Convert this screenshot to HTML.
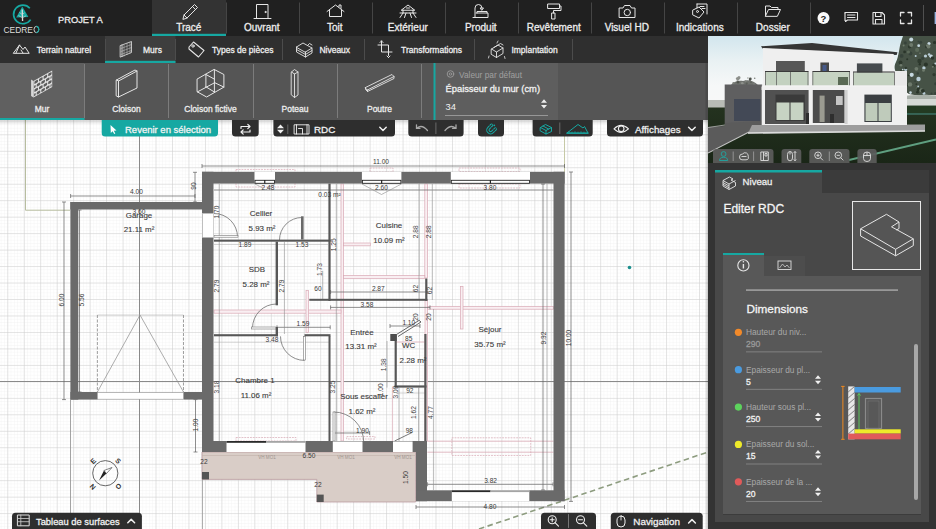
<!DOCTYPE html><html><head><meta charset="utf-8"><style>*{margin:0;padding:0}html,body{width:936px;height:529px;overflow:hidden;background:#fff}
svg{display:block;font-family:"Liberation Sans",sans-serif}
</style></head><body><svg width="936" height="529" viewBox="0 0 936 529"><rect x="0" y="0" width="936" height="36" fill="#202020" />
<rect x="152" y="0" width="74" height="36" fill="#333" />
<rect x="152" y="33.8" width="74" height="2.2" fill="#16a8a2" />
<rect x="226" y="2.5" width="1" height="31" fill="#454545" />
<rect x="299" y="2.5" width="1" height="31" fill="#454545" />
<rect x="372" y="2.5" width="1" height="31" fill="#454545" />
<rect x="445" y="2.5" width="1" height="31" fill="#454545" />
<rect x="518" y="2.5" width="1" height="31" fill="#454545" />
<rect x="591" y="2.5" width="1" height="31" fill="#454545" />
<rect x="664" y="2.5" width="1" height="31" fill="#454545" />
<rect x="737" y="2.5" width="1" height="31" fill="#454545" />
<rect x="810" y="2.5" width="1" height="31" fill="#454545" />
<rect x="923" y="5" width="1" height="26" fill="#505050" />
<text x="188.8" y="30.5" font-size="10" fill="#eee" font-weight="normal" text-anchor="middle" stroke="#eee" stroke-width="0.28" class="tx">Tracé</text>
<text x="261.8" y="30.5" font-size="10" fill="#eee" font-weight="normal" text-anchor="middle" stroke="#eee" stroke-width="0.28" class="tx">Ouvrant</text>
<text x="334.8" y="30.5" font-size="10" fill="#eee" font-weight="normal" text-anchor="middle" stroke="#eee" stroke-width="0.28" class="tx">Toit</text>
<text x="407.8" y="30.5" font-size="10" fill="#eee" font-weight="normal" text-anchor="middle" stroke="#eee" stroke-width="0.28" class="tx">Extérieur</text>
<text x="480.8" y="30.5" font-size="10" fill="#eee" font-weight="normal" text-anchor="middle" stroke="#eee" stroke-width="0.28" class="tx">Produit</text>
<text x="553.8" y="30.5" font-size="10" fill="#eee" font-weight="normal" text-anchor="middle" stroke="#eee" stroke-width="0.28" class="tx">Revêtement</text>
<text x="626.8" y="30.5" font-size="10" fill="#eee" font-weight="normal" text-anchor="middle" stroke="#eee" stroke-width="0.28" class="tx">Visuel HD</text>
<text x="699.8" y="30.5" font-size="10" fill="#eee" font-weight="normal" text-anchor="middle" stroke="#eee" stroke-width="0.28" class="tx">Indications</text>
<text x="772.8" y="30.5" font-size="10" fill="#eee" font-weight="normal" text-anchor="middle" stroke="#eee" stroke-width="0.28" class="tx">Dossier</text>
<path d="M29.8 8.2 A9.3 9.3 0 1 0 30.6 19.6" fill="none" stroke="#16a8a2" stroke-width="1.7"/>
<path d="M22.3 6.5 L16.2 17.6 L28.4 17 Z" fill="#16a8a2"/>
<path d="M22.2 9.5 L22.6 21" stroke="#e0e0e0" stroke-width="1.3" fill="none"/>
<path d="M19.5 12.5 L22.2 14.5 L24.5 12.8 M18.5 15.5 L22.4 17.8 L26 15.8" stroke="#ccc" stroke-width="0.7" fill="none"/>
<text x="3.4" y="32.8" font-size="9" fill="#ddd" font-weight="normal" text-anchor="start" textLength="29.6" lengthAdjust="spacingAndGlyphs">CEDRE</text>
<ellipse cx="36.4" cy="29.5" rx="2.4" ry="3.1" fill="none" stroke="#ccc" stroke-width="1"/>
<path d="M36.4 26.4 A2.4 3.1 0 0 1 36.4 32.6" fill="none" stroke="#16a8a2" stroke-width="1.1"/>
<text x="58" y="22.5" font-size="9.3" fill="#eee" font-weight="normal" text-anchor="start" stroke="#eee" stroke-width="0.28" class="tx">PROJET A</text>
<rect x="0" y="36" width="708" height="27" fill="#2f2f2f" />
<rect x="105" y="36" width="70.5" height="27" fill="#3e3e3e" />
<rect x="105" y="60.8" width="70.5" height="2.2" fill="#16a8a2" />
<rect x="105" y="39" width="1" height="21" fill="#4c4c4c" />
<rect x="175" y="39" width="1" height="21" fill="#4c4c4c" />
<rect x="282" y="39" width="1" height="21" fill="#4c4c4c" />
<rect x="364" y="39" width="1" height="21" fill="#4c4c4c" />
<rect x="474" y="39" width="1" height="21" fill="#4c4c4c" />
<rect x="572" y="39" width="1" height="21" fill="#4c4c4c" />
<text x="36.7" y="52.8" font-size="8.5" fill="#eee" font-weight="normal" text-anchor="start" stroke="#eee" stroke-width="0.28" class="tx">Terrain naturel</text>
<text x="143" y="52.8" font-size="8.5" fill="#eee" font-weight="normal" text-anchor="start" stroke="#eee" stroke-width="0.28" class="tx">Murs</text>
<text x="212" y="52.8" font-size="8.5" fill="#eee" font-weight="normal" text-anchor="start" stroke="#eee" stroke-width="0.28" class="tx">Types de pièces</text>
<text x="319.4" y="52.8" font-size="8.5" fill="#eee" font-weight="normal" text-anchor="start" stroke="#eee" stroke-width="0.28" class="tx">Niveaux</text>
<text x="401" y="52.8" font-size="8.5" fill="#eee" font-weight="normal" text-anchor="start" stroke="#eee" stroke-width="0.28" class="tx">Transformations</text>
<text x="511.4" y="52.8" font-size="8.5" fill="#eee" font-weight="normal" text-anchor="start" stroke="#eee" stroke-width="0.28" class="tx">Implantation</text>
<rect x="0" y="63" width="708" height="57" fill="#555555" />
<rect x="0" y="63" width="434" height="57" fill="#555555" />
<rect x="0" y="63" width="84.5" height="57" fill="#606060" />
<rect x="0" y="118" width="84.5" height="2" fill="#16a8a2" />
<rect x="84" y="64" width="1" height="54" fill="#7c7c7c" />
<rect x="168" y="64" width="1" height="54" fill="#7c7c7c" />
<rect x="253" y="64" width="1" height="54" fill="#7c7c7c" />
<rect x="337" y="64" width="1" height="54" fill="#7c7c7c" />
<rect x="421" y="64" width="1" height="54" fill="#7c7c7c" />
<text x="42" y="111.8" font-size="8.5" fill="#eee" font-weight="normal" text-anchor="middle" stroke="#eee" stroke-width="0.28" class="tx">Mur</text>
<text x="126.5" y="111.8" font-size="8.5" fill="#eee" font-weight="normal" text-anchor="middle" stroke="#eee" stroke-width="0.28" class="tx">Cloison</text>
<text x="210.5" y="111.8" font-size="8.5" fill="#eee" font-weight="normal" text-anchor="middle" stroke="#eee" stroke-width="0.28" class="tx">Cloison fictive</text>
<text x="295" y="111.8" font-size="8.5" fill="#eee" font-weight="normal" text-anchor="middle" stroke="#eee" stroke-width="0.28" class="tx">Poteau</text>
<text x="379.5" y="111.8" font-size="8.5" fill="#eee" font-weight="normal" text-anchor="middle" stroke="#eee" stroke-width="0.28" class="tx">Poutre</text>
<rect x="434" y="63" width="124" height="57" fill="#5e5e5e" />
<rect x="433.5" y="63" width="2" height="57" fill="#16a8a2" />
<rect x="705.5" y="63" width="2.5" height="57" fill="#4a4a4a" />
<text x="459" y="77.5" font-size="8.3" fill="#a0a0a0" font-weight="normal" text-anchor="start" >Valeur par défaut</text>
<text x="445.5" y="92" font-size="9.35" fill="#f2f2f2" font-weight="normal" text-anchor="start" stroke="#f2f2f2" stroke-width="0.28" class="tx">Épaisseur du mur (cm)</text>
<text x="445.5" y="110" font-size="9.35" fill="#f2f2f2" font-weight="normal" text-anchor="start" >34</text>
<rect x="445" y="115" width="103" height="0.8" fill="#a5a5a5" />
<svg x="0" y="120" width="708" height="409" viewBox="0 120 708 409">
<defs>
<pattern id="gf" x="7.3" y="150.8" width="3.294" height="3.294" patternUnits="userSpaceOnUse"><path d="M0 0H3.294M0 0V3.294" stroke="#eeeeee" stroke-width="0.6" fill="none"/></pattern>
<pattern id="gc" x="7.3" y="150.8" width="16.47" height="16.47" patternUnits="userSpaceOnUse"><path d="M0 0H16.47M0 0V16.47" stroke="#cdcdcd" stroke-width="1" fill="none"/></pattern>
<linearGradient id="shT" x1="0" y1="0" x2="0" y2="1"><stop offset="0" stop-color="#000" stop-opacity="0.16"/><stop offset="1" stop-color="#000" stop-opacity="0"/></linearGradient>
<linearGradient id="shR" x1="0" x2="1"><stop offset="0" stop-color="#000" stop-opacity="0"/><stop offset="1" stop-color="#000" stop-opacity="0.22"/></linearGradient>
</defs>
<rect x="0" y="120" width="708" height="409" fill="#fff"/>
<rect x="0" y="120" width="708" height="409" fill="url(#gf)"/>
<rect x="0" y="120" width="708" height="409" fill="url(#gc)"/>
<line x1="139.5" y1="120" x2="139.5" y2="529" stroke="#8a8a8a" stroke-width="1" />
<line x1="0" y1="381.5" x2="708" y2="381.5" stroke="#8a8a8a" stroke-width="1" />
<line x1="70.5" y1="399.6" x2="70.5" y2="529" stroke="#9a9a9a" stroke-width="0.9" />
<line x1="202.4" y1="452" x2="202.4" y2="529" stroke="#9a9a9a" stroke-width="0.9" />
<path d="M25.5 120 V210.2 H70" fill="none" stroke="#b7bd9f" stroke-width="1"/>
<line x1="564.5" y1="120" x2="564.5" y2="172" stroke="#c6c9a6" stroke-width="1" />
<path d="M479 529 L708 452" stroke="#8d9c7f" stroke-width="1.6" stroke-dasharray="5.5 3.5"/>
<path d="M202 452 H415.6 V502 H316.8 V479.4 H202 Z" fill="#d9cdc7" stroke="#b99aa0" stroke-width="0.8"/>
<rect x="202" y="472" width="7" height="7.4" fill="#555" />
<rect x="316.8" y="494.6" width="6.9" height="7.4" fill="#555" />
<line x1="202" y1="455.5" x2="415" y2="455.5" stroke="#c0b0aa" stroke-width="0.6" />
<rect x="341" y="184" width="2.6" height="257" fill="#f9eff2" stroke="#d9a9b5" stroke-width="0.7"/>
<rect x="424.8" y="184" width="2.6" height="94" fill="#f9eff2" stroke="#d9a9b5" stroke-width="0.7"/>
<rect x="343.6" y="275.4" width="81.2" height="3.0" fill="#f9eff2" stroke="#d9a9b5" stroke-width="0.7"/>
<rect x="214" y="310" width="127" height="3.2" fill="#f9eff2" stroke="#d9a9b5" stroke-width="0.7"/>
<rect x="427.4" y="306.6" width="126.1" height="2.6" fill="#f9eff2" stroke="#d9a9b5" stroke-width="0.7"/>
<rect x="460.5" y="286.5" width="2.5" height="42.5" fill="#f9eff2" stroke="#d9a9b5" stroke-width="0.7"/>
<rect x="343.6" y="243" width="26.7" height="2.8" fill="#f9eff2" stroke="#d9a9b5" stroke-width="0.7"/>
<rect x="306" y="290.5" width="2.5" height="42.1" fill="#f9eff2" stroke="#d9a9b5" stroke-width="0.7"/>
<rect x="425" y="300.5" width="2.4" height="140.5" fill="#f9eff2" stroke="#d9a9b5" stroke-width="0.7"/>
<line x1="427.4" y1="441.2" x2="553.5" y2="441.2" stroke="#d9a9b5" stroke-width="0.8" />
<line x1="427.4" y1="452.2" x2="553.5" y2="452.2" stroke="#d9a9b5" stroke-width="0.8" />
<line x1="396" y1="342" x2="424.5" y2="342" stroke="#d9a9b5" stroke-width="0.8" />
<line x1="392.4" y1="386.5" x2="392.4" y2="441" stroke="#d9a9b5" stroke-width="0.7" />
<rect x="236" y="169.5" width="59" height="17.5" fill="none" stroke="#d9a9b5" stroke-width="0.7" stroke-dasharray="1.8 1"/>
<rect x="370" y="168" width="23" height="4" fill="none" stroke="#d9a9b5" stroke-width="0.7" stroke-dasharray="1.8 1"/>
<rect x="459" y="168" width="61" height="3.5" fill="none" stroke="#d9a9b5" stroke-width="0.7" stroke-dasharray="1.8 1"/>
<rect x="459" y="184" width="61" height="4" fill="none" stroke="#d9a9b5" stroke-width="0.7" stroke-dasharray="1.8 1"/>
<rect x="236" y="437.5" width="60" height="3.5" fill="none" stroke="#d9a9b5" stroke-width="0.7" stroke-dasharray="1.8 1"/>
<rect x="451.8" y="437.8" width="78.9" height="17.7" fill="none" stroke="#d9a9b5" stroke-width="0.7" stroke-dasharray="1.8 1"/>
<rect x="346.7" y="436.5" width="28.3" height="2.5" fill="none" stroke="#d9a9b5" stroke-width="0.7" stroke-dasharray="1.8 1"/>
<line x1="202" y1="166" x2="564.5" y2="166" stroke="#5e5e5e" stroke-width="0.7" />
<line x1="202" y1="164" x2="202" y2="168" stroke="#5e5e5e" stroke-width="0.7" />
<line x1="564.5" y1="164" x2="564.5" y2="168" stroke="#5e5e5e" stroke-width="0.7" />
<line x1="214" y1="190" x2="553.5" y2="190" stroke="#5e5e5e" stroke-width="0.7" />
<line x1="70.6" y1="196" x2="195" y2="196" stroke="#5e5e5e" stroke-width="0.7" />
<line x1="70.6" y1="194" x2="70.6" y2="198" stroke="#5e5e5e" stroke-width="0.7" />
<line x1="195" y1="194" x2="195" y2="198" stroke="#5e5e5e" stroke-width="0.7" />
<line x1="195" y1="172.3" x2="195" y2="202" stroke="#5e5e5e" stroke-width="0.7" />
<line x1="193" y1="172.3" x2="197" y2="172.3" stroke="#5e5e5e" stroke-width="0.7" />
<line x1="193" y1="202" x2="197" y2="202" stroke="#5e5e5e" stroke-width="0.7" />
<line x1="64" y1="202" x2="64" y2="399.6" stroke="#5e5e5e" stroke-width="0.7" />
<line x1="62" y1="202" x2="66" y2="202" stroke="#5e5e5e" stroke-width="0.7" />
<line x1="62" y1="399.6" x2="66" y2="399.6" stroke="#5e5e5e" stroke-width="0.7" />
<line x1="79.5" y1="210" x2="79.5" y2="392" stroke="#5e5e5e" stroke-width="0.7" />
<line x1="77.5" y1="210" x2="81.5" y2="210" stroke="#5e5e5e" stroke-width="0.7" />
<line x1="77.5" y1="392" x2="81.5" y2="392" stroke="#5e5e5e" stroke-width="0.7" />
<line x1="571" y1="172" x2="571" y2="501.4" stroke="#5e5e5e" stroke-width="0.7" />
<line x1="569" y1="172" x2="573" y2="172" stroke="#5e5e5e" stroke-width="0.7" />
<line x1="569" y1="501.4" x2="573" y2="501.4" stroke="#5e5e5e" stroke-width="0.7" />
<line x1="543" y1="184" x2="543" y2="490" stroke="#5e5e5e" stroke-width="0.7" />
<line x1="541" y1="184" x2="545" y2="184" stroke="#5e5e5e" stroke-width="0.7" />
<line x1="541" y1="490" x2="545" y2="490" stroke="#5e5e5e" stroke-width="0.7" />
<line x1="416" y1="507" x2="564.5" y2="507" stroke="#5e5e5e" stroke-width="0.7" />
<line x1="416" y1="505" x2="416" y2="509" stroke="#5e5e5e" stroke-width="0.7" />
<line x1="564.5" y1="505" x2="564.5" y2="509" stroke="#5e5e5e" stroke-width="0.7" />
<line x1="427.6" y1="484.3" x2="553" y2="484.3" stroke="#5e5e5e" stroke-width="0.7" />
<line x1="427.6" y1="482.3" x2="427.6" y2="486.3" stroke="#5e5e5e" stroke-width="0.7" />
<line x1="553" y1="482.3" x2="553" y2="486.3" stroke="#5e5e5e" stroke-width="0.7" />
<line x1="195.5" y1="399.6" x2="195.5" y2="452" stroke="#5e5e5e" stroke-width="0.7" />
<line x1="193.5" y1="399.6" x2="197.5" y2="399.6" stroke="#5e5e5e" stroke-width="0.7" />
<line x1="193.5" y1="452" x2="197.5" y2="452" stroke="#5e5e5e" stroke-width="0.7" />
<line x1="277" y1="327.3" x2="330.2" y2="327.3" stroke="#5e5e5e" stroke-width="0.7" />
<line x1="277" y1="325.3" x2="277" y2="329.3" stroke="#5e5e5e" stroke-width="0.7" />
<line x1="330.2" y1="325.3" x2="330.2" y2="329.3" stroke="#5e5e5e" stroke-width="0.7" />
<line x1="330.6" y1="292" x2="427" y2="292" stroke="#5e5e5e" stroke-width="0.7" />
<line x1="330.6" y1="290" x2="330.6" y2="294" stroke="#5e5e5e" stroke-width="0.7" />
<line x1="427" y1="290" x2="427" y2="294" stroke="#5e5e5e" stroke-width="0.7" />
<line x1="330.6" y1="307.4" x2="430" y2="307.4" stroke="#5e5e5e" stroke-width="0.7" />
<line x1="330.6" y1="305.4" x2="330.6" y2="309.4" stroke="#5e5e5e" stroke-width="0.7" />
<line x1="430" y1="305.4" x2="430" y2="309.4" stroke="#5e5e5e" stroke-width="0.7" />
<line x1="390" y1="326" x2="420" y2="326" stroke="#5e5e5e" stroke-width="0.7" />
<line x1="390" y1="324" x2="390" y2="328" stroke="#5e5e5e" stroke-width="0.7" />
<line x1="420" y1="324" x2="420" y2="328" stroke="#5e5e5e" stroke-width="0.7" />
<line x1="333.7" y1="433" x2="369.6" y2="433" stroke="#5e5e5e" stroke-width="0.7" />
<line x1="333.7" y1="431" x2="333.7" y2="435" stroke="#5e5e5e" stroke-width="0.7" />
<line x1="369.6" y1="431" x2="369.6" y2="435" stroke="#5e5e5e" stroke-width="0.7" />
<line x1="214" y1="342.2" x2="330" y2="342.2" stroke="#b5b5b5" stroke-width="0.6" />
<line x1="396" y1="393" x2="426" y2="393" stroke="#b5b5b5" stroke-width="0.6" />
<line x1="214" y1="447" x2="416" y2="447" stroke="#b5b5b5" stroke-width="0.6" />
<line x1="214" y1="244.5" x2="328" y2="244.5" stroke="#b5b5b5" stroke-width="0.6" />
<line x1="219.3" y1="184" x2="219.3" y2="441" stroke="#8c8c8c" stroke-width="0.6" />
<line x1="336.3" y1="184" x2="336.3" y2="441" stroke="#8c8c8c" stroke-width="0.6" />
<line x1="284.4" y1="242" x2="284.4" y2="334" stroke="#8c8c8c" stroke-width="0.6" />
<line x1="322.7" y1="270.8" x2="322.7" y2="300" stroke="#8c8c8c" stroke-width="0.6" />
<line x1="387" y1="341" x2="387" y2="387.6" stroke="#8c8c8c" stroke-width="0.6" />
<line x1="399" y1="387.6" x2="399" y2="441" stroke="#8c8c8c" stroke-width="0.6" />
<line x1="418.5" y1="387.6" x2="418.5" y2="441" stroke="#8c8c8c" stroke-width="0.6" />
<line x1="419" y1="184" x2="419" y2="300" stroke="#8c8c8c" stroke-width="0.6" />
<line x1="432.3" y1="184" x2="432.3" y2="300" stroke="#8c8c8c" stroke-width="0.6" />
<line x1="433.6" y1="309" x2="433.6" y2="490" stroke="#8c8c8c" stroke-width="0.6" />
<line x1="547" y1="184" x2="547" y2="490" stroke="#8c8c8c" stroke-width="0.6" />
<line x1="559" y1="184" x2="559" y2="490" stroke="#8c8c8c" stroke-width="0.6" />
<path d="M97.4 392 L140 315 L183.5 392" fill="none" stroke="#8a8a8a" stroke-width="0.7"/>
<path d="M97.4 315 V392 M183.5 315 V392" fill="none" stroke="#777" stroke-width="0.7" stroke-dasharray="3 1.5"/>
<line x1="97.4" y1="315" x2="183.5" y2="315" stroke="#aaa" stroke-width="0.5" />
<path d="M214.0 213.5 A23.5 23.5 0 0 1 237.5 237.0" fill="none" stroke="#6e6e6e" stroke-width="0.8"/>
<rect x="214" y="235.5" width="24" height="1.7" fill="#fff" stroke="#777" stroke-width="0.6"/>
<path d="M279.5 240.0 A22.5 22.5 0 0 1 302.0 217.5" fill="none" stroke="#6e6e6e" stroke-width="0.8"/>
<rect x="301" y="216.3" width="2.6" height="23.2" fill="#6a6a6a" />
<path d="M252.5 328.0 A24 24 0 0 1 276.5 304.0" fill="none" stroke="#6e6e6e" stroke-width="0.8"/>
<rect x="251.5" y="327" width="25.0" height="2" fill="#fff" stroke="#777" stroke-width="0.6"/>
<path d="M304.5 360.4 A24 24 0 0 1 280.5 336.4" fill="none" stroke="#6e6e6e" stroke-width="0.8"/>
<rect x="303.5" y="336.4" width="1.8" height="23.6" fill="#fff" stroke="#777" stroke-width="0.6"/>
<path d="M333.7 412.0 A30 30 0 0 1 363.7 442.0" fill="none" stroke="#6e6e6e" stroke-width="0.8"/>
<rect x="333" y="412" width="2" height="29" fill="#fff" stroke="#777" stroke-width="0.6"/>
<path d="M362 184 L381.5 194.5 L401.4 184" fill="none" stroke="#8a8a8a" stroke-width="0.6"/>
<path d="M255 184 L263 188 M275 184 L267 188" fill="none" stroke="#8a8a8a" stroke-width="0.6"/>
<path d="M396.5 334.5 L419.2 320.3 L421 322 L398 336.5" fill="none" stroke="#555" stroke-width="0.9"/>
<path d="M394.6 441 L412 432.5" fill="none" stroke="#555" stroke-width="0.8"/>
<rect x="70.4" y="202" width="131.6" height="7.5" fill="#6a6a6a" />
<rect x="70.4" y="202" width="7.9" height="197.6" fill="#6a6a6a" />
<rect x="70.4" y="392" width="27.0" height="7.6" fill="#6a6a6a" />
<rect x="183.5" y="392" width="18.5" height="7.6" fill="#6a6a6a" />
<rect x="97.4" y="392.5" width="86.1" height="6.7" fill="#fff" stroke="#888" stroke-width="0.6"/>
<rect x="202" y="171.8" width="362.6" height="11.8" fill="#6a6a6a" />
<rect x="202" y="171.8" width="11.5" height="280.2" fill="#6a6a6a" />
<rect x="553.5" y="171.8" width="11.1" height="329.4" fill="#6a6a6a" />
<rect x="202" y="441" width="225" height="11" fill="#6a6a6a" />
<rect x="416" y="441" width="11" height="60.2" fill="#6a6a6a" />
<rect x="416" y="490.3" width="148.6" height="10.9" fill="#6a6a6a" />
<rect x="254.5" y="171.8" width="20.5" height="11.8" fill="#fff" />
<rect x="255.0" y="180.3" width="19.5" height="3" fill="#fff" stroke="#222" stroke-width="0.9"/>
<line x1="264.75" y1="180" x2="264.75" y2="183.6" stroke="#222" stroke-width="1.2" />
<rect x="361.9" y="171.8" width="39.5" height="11.8" fill="#fff" />
<rect x="362.4" y="180.3" width="38.5" height="3" fill="#fff" stroke="#222" stroke-width="0.9"/>
<line x1="381.65" y1="180" x2="381.65" y2="183.6" stroke="#222" stroke-width="1.2" />
<rect x="450.8" y="171.8" width="79.2" height="11.8" fill="#fff" />
<rect x="451.3" y="180.3" width="78.2" height="3" fill="#fff" stroke="#222" stroke-width="0.9"/>
<line x1="490.4" y1="180" x2="490.4" y2="183.6" stroke="#222" stroke-width="1.2" />
<rect x="202.5" y="213.5" width="11.0" height="23.9" fill="#fff" stroke="#c8c8c8" stroke-width="0.5"/>
<rect x="226.5" y="441" width="79.0" height="11" fill="#fff" />
<rect x="226.5" y="441" width="39.5" height="1.8" fill="#2a2a2a" />
<rect x="266.0" y="441" width="39.5" height="1.8" fill="#a5a5a5" />
<rect x="332.8" y="441.5" width="29.7" height="10.5" fill="#fff" />
<rect x="393" y="441.5" width="19.6" height="10.5" fill="#fff" />
<rect x="451.8" y="490.3" width="77.5" height="10.9" fill="#fff" />
<rect x="451.8" y="490.3" width="38.75" height="1.8" fill="#2a2a2a" />
<rect x="490.55" y="490.3" width="38.75" height="1.8" fill="#a5a5a5" />
<rect x="214" y="239.6" width="116.6" height="2.1" fill="#575757" />
<rect x="275.6" y="241.7" width="2.4" height="63.6" fill="#575757" />
<rect x="275.6" y="327" width="2.4" height="9.3" fill="#575757" />
<rect x="328.4" y="183.6" width="2.2" height="117.4" fill="#575757" />
<rect x="309.3" y="298.8" width="118.1" height="2.0" fill="#575757" />
<rect x="425.2" y="278.5" width="2.2" height="22.3" fill="#575757" />
<rect x="214" y="334.2" width="64" height="2.1" fill="#575757" />
<rect x="304.5" y="334.2" width="26.0" height="2.1" fill="#575757" />
<rect x="328.5" y="336" width="2.0" height="105" fill="#575757" />
<rect x="394.6" y="334.3" width="2.2" height="53.3" fill="#575757" />
<rect x="394.6" y="385.4" width="31.9" height="2.2" fill="#575757" />
<rect x="424.3" y="334" width="2.2" height="107" fill="#575757" />
<rect x="390.3" y="334" width="6.4" height="7" fill="#4e4e4e" />
<text x="139" y="215.5" font-size="7.95" fill="#3c3c3c" text-anchor="middle" dominant-baseline="central" stroke="#3c3c3c" stroke-width="0.12">Garage</text>
<text x="139" y="229" font-size="7.95" fill="#3c3c3c" text-anchor="middle" dominant-baseline="central" stroke="#3c3c3c" stroke-width="0.12">21.11 m²</text>
<text x="261" y="213.5" font-size="7.95" fill="#3c3c3c" text-anchor="middle" dominant-baseline="central" stroke="#3c3c3c" stroke-width="0.12">Cellier</text>
<text x="262" y="228" font-size="7.95" fill="#3c3c3c" text-anchor="middle" dominant-baseline="central" stroke="#3c3c3c" stroke-width="0.12">5.93 m²</text>
<text x="257" y="269.5" font-size="7.95" fill="#3c3c3c" text-anchor="middle" dominant-baseline="central" stroke="#3c3c3c" stroke-width="0.12">SDB</text>
<text x="256" y="284" font-size="7.95" fill="#3c3c3c" text-anchor="middle" dominant-baseline="central" stroke="#3c3c3c" stroke-width="0.12">5.28 m²</text>
<text x="389" y="225.5" font-size="7.95" fill="#3c3c3c" text-anchor="middle" dominant-baseline="central" stroke="#3c3c3c" stroke-width="0.12">Cuisine</text>
<text x="389" y="240" font-size="7.95" fill="#3c3c3c" text-anchor="middle" dominant-baseline="central" stroke="#3c3c3c" stroke-width="0.12">10.09 m²</text>
<text x="362" y="332" font-size="7.95" fill="#3c3c3c" text-anchor="middle" dominant-baseline="central" stroke="#3c3c3c" stroke-width="0.12">Entrée</text>
<text x="361" y="346.3" font-size="7.95" fill="#3c3c3c" text-anchor="middle" dominant-baseline="central" stroke="#3c3c3c" stroke-width="0.12">13.31 m²</text>
<text x="408.7" y="345.7" font-size="7.95" fill="#3c3c3c" text-anchor="middle" dominant-baseline="central" stroke="#3c3c3c" stroke-width="0.12">WC</text>
<text x="413" y="360" font-size="7.95" fill="#3c3c3c" text-anchor="middle" dominant-baseline="central" stroke="#3c3c3c" stroke-width="0.12">2.28 m²</text>
<text x="490" y="329" font-size="7.95" fill="#3c3c3c" text-anchor="middle" dominant-baseline="central" stroke="#3c3c3c" stroke-width="0.12">Séjour</text>
<text x="490" y="344" font-size="7.95" fill="#3c3c3c" text-anchor="middle" dominant-baseline="central" stroke="#3c3c3c" stroke-width="0.12">35.75 m²</text>
<text x="255" y="380.5" font-size="7.95" fill="#3c3c3c" text-anchor="middle" dominant-baseline="central" stroke="#3c3c3c" stroke-width="0.12">Chambre 1</text>
<text x="256" y="395" font-size="7.95" fill="#3c3c3c" text-anchor="middle" dominant-baseline="central" stroke="#3c3c3c" stroke-width="0.12">11.06 m²</text>
<text x="364" y="396.3" font-size="7.95" fill="#3c3c3c" text-anchor="middle" dominant-baseline="central" stroke="#3c3c3c" stroke-width="0.12">Sous escalier</text>
<text x="362" y="411.5" font-size="7.95" fill="#3c3c3c" text-anchor="middle" dominant-baseline="central" stroke="#3c3c3c" stroke-width="0.12">1.62 m²</text>
<text x="381" y="161" font-size="6.6" fill="#3a3a3a" text-anchor="middle" dominant-baseline="central" >11.00</text>
<text x="136.5" y="191" font-size="6.6" fill="#3a3a3a" text-anchor="middle" dominant-baseline="central" >4.00</text>
<text x="139" y="211" font-size="6.6" fill="#3a3a3a" text-anchor="middle" dominant-baseline="central" >3.60</text>
<text x="268" y="187" font-size="6.6" fill="#3a3a3a" text-anchor="middle" dominant-baseline="central" >2.48</text>
<text x="245" y="244.5" font-size="6.6" fill="#3a3a3a" text-anchor="middle" dominant-baseline="central" >1.89</text>
<text x="302" y="244.5" font-size="6.6" fill="#3a3a3a" text-anchor="middle" dominant-baseline="central" >1.53</text>
<text x="378.3" y="288.5" font-size="6.6" fill="#3a3a3a" text-anchor="middle" dominant-baseline="central" >2.87</text>
<text x="367" y="304.2" font-size="6.6" fill="#3a3a3a" text-anchor="middle" dominant-baseline="central" >3.58</text>
<text x="303" y="323" font-size="6.6" fill="#3a3a3a" text-anchor="middle" dominant-baseline="central" >1.59</text>
<text x="272" y="339.5" font-size="6.6" fill="#3a3a3a" text-anchor="middle" dominant-baseline="central" >3.48</text>
<text x="408.8" y="322.7" font-size="6.6" fill="#3a3a3a" text-anchor="middle" dominant-baseline="central" >1.10</text>
<text x="408.7" y="338.7" font-size="6.6" fill="#3a3a3a" text-anchor="middle" dominant-baseline="central" >85</text>
<text x="409.8" y="390.4" font-size="6.6" fill="#3a3a3a" text-anchor="middle" dominant-baseline="central" >92</text>
<text x="362.4" y="430.4" font-size="6.6" fill="#3a3a3a" text-anchor="middle" dominant-baseline="central" >1.90</text>
<text x="409.3" y="430.4" font-size="6.6" fill="#3a3a3a" text-anchor="middle" dominant-baseline="central" >98</text>
<text x="309" y="455.5" font-size="6.6" fill="#3a3a3a" text-anchor="middle" dominant-baseline="central" >6.50</text>
<text x="490.6" y="480.2" font-size="6.6" fill="#3a3a3a" text-anchor="middle" dominant-baseline="central" >3.82</text>
<text x="490" y="506" font-size="6.6" fill="#3a3a3a" text-anchor="middle" dominant-baseline="central" >4.80</text>
<text x="318" y="288.5" font-size="6.6" fill="#3a3a3a" text-anchor="middle" dominant-baseline="central" >60</text>
<text x="204" y="461.5" font-size="6.6" fill="#3a3a3a" text-anchor="middle" dominant-baseline="central" >22</text>
<text x="318" y="484" font-size="6.6" fill="#3a3a3a" text-anchor="middle" dominant-baseline="central" >22</text>
<text x="381.5" y="187" font-size="6.6" fill="#3a3a3a" text-anchor="middle" dominant-baseline="central" >2.60</text>
<text x="490" y="187" font-size="6.6" fill="#3a3a3a" text-anchor="middle" dominant-baseline="central" >3.80</text>
<text x="329.5" y="194" font-size="6.6" fill="#3a3a3a" text-anchor="middle" dominant-baseline="central" >0.03 m²</text>
<text x="193.5" y="186" font-size="6.6" fill="#3a3a3a" text-anchor="middle" dominant-baseline="central" transform="rotate(-90 193.5 186)" >90</text>
<text x="216" y="212" font-size="6.6" fill="#3a3a3a" text-anchor="middle" dominant-baseline="central" transform="rotate(-90 216 212)" >1.70</text>
<text x="216" y="286" font-size="6.6" fill="#3a3a3a" text-anchor="middle" dominant-baseline="central" transform="rotate(-90 216 286)" >2.79</text>
<text x="281" y="286" font-size="6.6" fill="#3a3a3a" text-anchor="middle" dominant-baseline="central" transform="rotate(-90 281 286)" >2.79</text>
<text x="319.3" y="269.6" font-size="6.6" fill="#3a3a3a" text-anchor="middle" dominant-baseline="central" transform="rotate(-90 319.3 269.6)" >1.73</text>
<text x="415.7" y="231.7" font-size="6.6" fill="#3a3a3a" text-anchor="middle" dominant-baseline="central" transform="rotate(-90 415.7 231.7)" >2.88</text>
<text x="428.9" y="231.7" font-size="6.6" fill="#3a3a3a" text-anchor="middle" dominant-baseline="central" transform="rotate(-90 428.9 231.7)" >2.88</text>
<text x="543.5" y="338" font-size="6.6" fill="#3a3a3a" text-anchor="middle" dominant-baseline="central" transform="rotate(-90 543.5 338)" >9.32</text>
<text x="568" y="338" font-size="6.6" fill="#3a3a3a" text-anchor="middle" dominant-baseline="central" transform="rotate(-90 568 338)" >10.00</text>
<text x="216" y="387" font-size="6.6" fill="#3a3a3a" text-anchor="middle" dominant-baseline="central" transform="rotate(-90 216 387)" >3.18</text>
<text x="332.6" y="387" font-size="6.6" fill="#3a3a3a" text-anchor="middle" dominant-baseline="central" transform="rotate(-90 332.6 387)" >3.25</text>
<text x="381" y="389.8" font-size="6.6" fill="#3a3a3a" text-anchor="middle" dominant-baseline="central" transform="rotate(-90 381 389.8)" >1.00</text>
<text x="395.6" y="392" font-size="6.6" fill="#3a3a3a" text-anchor="middle" dominant-baseline="central" transform="rotate(-90 395.6 392)" >3.00</text>
<text x="413.7" y="412.6" font-size="6.6" fill="#3a3a3a" text-anchor="middle" dominant-baseline="central" transform="rotate(-90 413.7 412.6)" >1.62</text>
<text x="430.4" y="412.6" font-size="6.6" fill="#3a3a3a" text-anchor="middle" dominant-baseline="central" transform="rotate(-90 430.4 412.6)" >4.77</text>
<text x="405.5" y="477.5" font-size="6.6" fill="#3a3a3a" text-anchor="middle" dominant-baseline="central" transform="rotate(-90 405.5 477.5)" >1.50</text>
<text x="61" y="300" font-size="6.6" fill="#3a3a3a" text-anchor="middle" dominant-baseline="central" transform="rotate(-90 61 300)" >6.00</text>
<text x="81" y="300" font-size="6.6" fill="#3a3a3a" text-anchor="middle" dominant-baseline="central" transform="rotate(-90 81 300)" >5.56</text>
<text x="195" y="425" font-size="6.6" fill="#3a3a3a" text-anchor="middle" dominant-baseline="central" transform="rotate(-90 195 425)" >1.00</text>
<text x="383.3" y="364.8" font-size="6.6" fill="#3a3a3a" text-anchor="middle" dominant-baseline="central" transform="rotate(-90 383.3 364.8)" >1.38</text>
<text x="333.6" y="244.7" font-size="6.6" fill="#3a3a3a" text-anchor="middle" dominant-baseline="central" transform="rotate(-90 333.6 244.7)" >1.25</text>
<text x="415.7" y="288.5" font-size="6.6" fill="#3a3a3a" text-anchor="middle" dominant-baseline="central" transform="rotate(-90 415.7 288.5)" >62</text>
<text x="429.3" y="290.5" font-size="6.6" fill="#3a3a3a" text-anchor="middle" dominant-baseline="central" transform="rotate(-90 429.3 290.5)" >62</text>
<text x="415.2" y="317" font-size="6.6" fill="#3a3a3a" text-anchor="middle" dominant-baseline="central" transform="rotate(-90 415.2 317)" >20</text>
<text x="428" y="317" font-size="6.6" fill="#3a3a3a" text-anchor="middle" dominant-baseline="central" transform="rotate(-90 428 317)" >20</text>
<text x="267" y="457.5" font-size="4.6" fill="#a09590" text-anchor="middle" dominant-baseline="central" >VH MO1</text>
<text x="346" y="457.5" font-size="4.6" fill="#a09590" text-anchor="middle" dominant-baseline="central" >VH MO1</text>
<text x="403" y="457.5" font-size="4.6" fill="#a09590" text-anchor="middle" dominant-baseline="central" >VH MO1</text>
<circle cx="105.3" cy="473.2" r="12.6" fill="none" stroke="#555" stroke-width="0.9"/>
<path d="M99 480.4 L104 470.5 L106.5 473.5 Z" fill="#222"/>
<path d="M112 467.5 L104 470.5 L106.5 473.5 Z" fill="#fff" stroke="#333" stroke-width="0.6"/>
<text x="93.2" y="461" font-size="7" fill="#333" text-anchor="middle" dominant-baseline="central" transform="rotate(-45 93.2 461)" font-weight="bold">E</text>
<text x="118.3" y="461" font-size="7" fill="#333" text-anchor="middle" dominant-baseline="central" transform="rotate(45 118.3 461)" font-weight="bold">S</text>
<text x="92.8" y="486.7" font-size="7" fill="#333" text-anchor="middle" dominant-baseline="central" transform="rotate(45 92.8 486.7)" font-weight="bold">N</text>
<text x="118.3" y="486.4" font-size="7" fill="#333" text-anchor="middle" dominant-baseline="central" transform="rotate(-45 118.3 486.4)" font-weight="bold">O</text>
<circle cx="629.5" cy="267.5" r="1.8" fill="#1b8f8d"/>
<rect x="704.5" y="120" width="3.5" height="409" fill="url(#shR)"/>
<rect x="0" y="120" width="708" height="5" fill="url(#shT)"/>
</svg>
<path d="M101.7 120 H218 V133.0 Q218 136.5 214.5 136.5 H105.2 Q101.7 136.5 101.7 133.0 Z" fill="#16a8a2"/>
<text x="125" y="132.6" font-size="9.5" fill="#f4f4f4" font-weight="normal" text-anchor="start" stroke="#f4f4f4" stroke-width="0.28" class="tx">Revenir en sélection</text>
<path d="M110.5 125 L110.8 133 L112.6 131.3 L114.2 134 L115.3 133.4 L113.8 130.8 L116.5 130.5 Z" fill="#fff"/>
<path d="M232 120 H258.7 V133.0 Q258.7 136.5 255.2 136.5 H235.5 Q232 136.5 232 133.0 Z" fill="#2e2e2e"/>
<path d="M273.4 120 H395 V133.0 Q395 136.5 391.5 136.5 H276.9 Q273.4 136.5 273.4 133.0 Z" fill="#2e2e2e"/>
<path d="M408.3 120 H463.6 V133.0 Q463.6 136.5 460.1 136.5 H411.8 Q408.3 136.5 408.3 133.0 Z" fill="#2e2e2e"/>
<path d="M478 120 H504 V133.0 Q504 136.5 500.5 136.5 H481.5 Q478 136.5 478 133.0 Z" fill="#2e2e2e"/>
<path d="M532.6 120 H592.7 V133.0 Q592.7 136.5 589.2 136.5 H536.1 Q532.6 136.5 532.6 133.0 Z" fill="#2e2e2e"/>
<path d="M607 120 H703 V133.0 Q703 136.5 699.5 136.5 H610.5 Q607 136.5 607 133.0 Z" fill="#2e2e2e"/>
<text x="635" y="132.6" font-size="9.8" fill="#f2f2f2" font-weight="normal" text-anchor="start" stroke="#f2f2f2" stroke-width="0.28" class="tx">Affichages</text>
<text x="314" y="132.8" font-size="9.8" fill="#f2f2f2" font-weight="normal" text-anchor="start" stroke="#f2f2f2" stroke-width="0.28" class="tx">RDC</text>
<path d="M12 529 V516.3 Q12 512.8 15.5 512.8 H138.4 Q141.9 512.8 141.9 516.3 V529 Z" fill="#2e2e2e"/>
<text x="36" y="524.6" font-size="9.35" fill="#f2f2f2" font-weight="normal" text-anchor="start" stroke="#f2f2f2" stroke-width="0.28" class="tx">Tableau de surfaces</text>
<path d="M541 529 V516.3 Q541 512.8 544.5 512.8 H592.5 Q596 512.8 596 516.3 V529 Z" fill="#2e2e2e"/>
<path d="M610.8 529 V516.3 Q610.8 512.8 614.3 512.8 H699.2 Q702.7 512.8 702.7 516.3 V529 Z" fill="#2e2e2e"/>
<text x="633.3" y="524.6" font-size="9.9" fill="#f2f2f2" font-weight="normal" text-anchor="start" stroke="#f2f2f2" stroke-width="0.28" class="tx">Navigation</text>
<g fill="none" stroke="#f0f0f0" stroke-width="1.2" stroke-linecap="round" stroke-linejoin="round">
<path d="M241 128.5 V126.5 H250 M247.8 124.3 L250 126.5 L247.8 128.7 M250 130 V132 H241 M243.2 129.8 L241 132 L243.2 134.2"/>
<path d="M379.8 127.3 L383 130.5 L386.2 127.3" stroke-width="1.5"/>
<path d="M294.5 124.8 H309 V134 H294.5 Z M296.5 124.8 V134 M307 124.8 V134 M298.5 128.5 H302.5 V134" stroke-width="0.9"/>
<path d="M614 128.8 Q621 121.8 628.5 128.8 Q621 135.8 614 128.8 Z" stroke-width="1.1"/><circle cx="621.2" cy="128.8" r="2.8" stroke-width="1.1"/>
<path d="M688.6 127.2 L691.9 130.5 L695.2 127.2" stroke-width="1.5"/>
<rect x="17.8" y="515" width="11.4" height="10.8" stroke-width="1" stroke="#e0e0e0"/><path d="M18 518.5 H29 M18 521.7 H29 M20.8 515 V525.8" stroke-width="0.8" stroke="#cfcfcf"/>
<path d="M127.8 522.8 L131.2 519.4 L134.6 522.8" stroke-width="1.5"/>
<circle cx="552.2" cy="519.8" r="4" stroke-width="1.1"/><path d="M555 522.6 L558.5 526.1 M550.2 519.8 H554.2 M552.2 517.8 V521.8" stroke-width="1.1"/>
<path d="M568.5 514.5 V527.5" stroke="#777" stroke-width="1"/>
<circle cx="580.5" cy="519.8" r="4" stroke-width="1.1"/><path d="M583.3 522.6 L586.8 526.1 M578.5 519.8 H582.5" stroke-width="1.1"/>
<rect x="617" y="516" width="8" height="11" rx="4" stroke-width="1"/><path d="M621 516 V520" stroke-width="0.9"/>
<path d="M688.6 523 L692 519.6 L695.4 523" stroke-width="1.5"/>
</g>
<path d="M277 128.2 L280.5 124.4 L284 128.2 Z M277 129.8 L280.5 133.6 L284 129.8 Z" fill="#f0f0f0"/>
<path d="M287.8 124.5 V134" stroke="#6a6a6a" stroke-width="1"/>
<path d="M435.9 122.5 V134" stroke="#6a6a6a" stroke-width="1"/>
<path d="M559.8 122.5 V134" stroke="#6a6a6a" stroke-width="1"/>
<g fill="none" stroke="#a8a8a8" stroke-width="1.3" stroke-linecap="round">
<path d="M417 128 Q422 124 427.5 130.5 M416.5 124.8 V128.3 H420"/>
<path d="M455.5 128 Q450.5 124 445 130.5 M456 124.8 V128.3 H452.5"/>
</g>
<g fill="none" stroke="#16a8a2" stroke-width="1.3" stroke-linecap="round" stroke-linejoin="round">
<g transform="translate(490.6 130) rotate(45)"><path d="M-2.7 -4 V0 A2.7 2.7 0 0 0 2.7 0 V-4" stroke-width="3.4"/><path d="M-2.7 -4.5 V0 A2.7 2.7 0 0 0 2.7 0 V-4.5" stroke="#2e2e2e" stroke-width="1.3"/><path d="M-4.4 -2.2 H-1 M1 -2.2 H4.4" stroke="#2e2e2e" stroke-width="0.6"/></g>
<circle cx="494.3" cy="125.3" r="0.9" fill="#16a8a2" stroke="none"/>
<path d="M540.5 127.5 L545.5 124.5 L551.5 127.5 V131.5 L546 134 L540.5 131 Z M540.5 127.5 L546 130.5 L551.5 127.5 M546 130.5 V134 M543 126 L548.5 129" stroke-width="1"/>
<path d="M567 133 L578 124.5 L583 128 L584.5 126.5 L588 133 Z M567 133 H588" stroke-width="1"/><path d="M569 133 V131.5 M572 133 V132 M575 133 V131.5 M578 133 V132 M581 133 V131.5 M584 133 V132" stroke-width="0.6"/>
</g>
<svg x="708" y="36" width="228" height="127" viewBox="708 36 228 127">
<defs>
<linearGradient id="sky" x1="0" y1="0" x2="0" y2="1"><stop offset="0" stop-color="#d2e6ee"/><stop offset="0.35" stop-color="#e9f1f3"/><stop offset="0.7" stop-color="#f6f8f8"/><stop offset="1" stop-color="#f8f8f8"/></linearGradient>
<linearGradient id="lawn" x1="0" y1="0" x2="0" y2="1"><stop offset="0" stop-color="#24321f"/><stop offset="1" stop-color="#1a2617"/></linearGradient>
</defs>
<rect x="708" y="36" width="228" height="71" fill="url(#sky)"/>
<!-- distant ground -->
<rect x="708" y="107" width="228" height="56" fill="url(#lawn)"/>
<!-- right trees -->
<path d="M903 36 H936 V98 C928 97 918 96 909 94 C903 90 899 84 900 77 C895 73 893 67 896 62 C899 56 899 48 901 42 Z" fill="#465246"/>
<circle cx="909.6" cy="46.7" r="1.7" fill="#2f3a2f"/>
<circle cx="929.0" cy="43.5" r="1.6" fill="#c6d8e0"/>
<circle cx="905.4" cy="43.0" r="1.4" fill="#36423a"/>
<circle cx="900.5" cy="62.6" r="2.0" fill="#2f3a2f"/>
<circle cx="934.0" cy="74.6" r="1.6" fill="#2f3a2f"/>
<circle cx="919.5" cy="61.0" r="2.2" fill="#2f3a2f"/>
<circle cx="918.7" cy="45.7" r="1.4" fill="#c6d8e0"/>
<circle cx="901.6" cy="55.9" r="1.9" fill="#36423a"/>
<circle cx="901.0" cy="71.1" r="1.1" fill="#2f3a2f"/>
<circle cx="918.4" cy="41.6" r="0.9" fill="#36423a"/>
<circle cx="916.4" cy="68.8" r="1.9" fill="#6e7a6c"/>
<circle cx="919.8" cy="64.3" r="1.2" fill="#2a352a"/>
<circle cx="904.0" cy="83.2" r="0.9" fill="#5c6a5a"/>
<circle cx="917.5" cy="88.8" r="1.8" fill="#5c6a5a"/>
<circle cx="920.7" cy="42.2" r="1.5" fill="#36423a"/>
<circle cx="926.5" cy="46.8" r="1.5" fill="#2f3a2f"/>
<circle cx="934.5" cy="42.5" r="1.6" fill="#2a352a"/>
<circle cx="931.1" cy="56.2" r="1.8" fill="#c6d8e0"/>
<circle cx="916.4" cy="84.2" r="0.9" fill="#2f3a2f"/>
<circle cx="933.8" cy="65.5" r="1.7" fill="#2f3a2f"/>
<circle cx="925.5" cy="56.0" r="1.6" fill="#b8ccd6"/>
<circle cx="929.1" cy="54.5" r="1.3" fill="#b8ccd6"/>
<circle cx="910.5" cy="92.6" r="1.3" fill="#c6d8e0"/>
<circle cx="927.0" cy="45.5" r="1.1" fill="#6e7a6c"/>
<circle cx="932.8" cy="66.8" r="1.0" fill="#6e7a6c"/>
<circle cx="918.4" cy="89.2" r="1.9" fill="#2a352a"/>
<circle cx="918.5" cy="79.0" r="2.2" fill="#b8ccd6"/>
<circle cx="931.5" cy="93.5" r="1.0" fill="#36423a"/>
<circle cx="902.9" cy="76.2" r="0.8" fill="#2a352a"/>
<circle cx="920.0" cy="53.2" r="0.8" fill="#6e7a6c"/>
<circle cx="917.8" cy="73.4" r="1.2" fill="#36423a"/>
<circle cx="923.9" cy="67.9" r="1.7" fill="#b8ccd6"/>
<circle cx="925.9" cy="64.5" r="2.0" fill="#2a352a"/>
<circle cx="923.5" cy="70.4" r="1.4" fill="#6e7a6c"/>
<circle cx="901.0" cy="74.8" r="0.9" fill="#2f3a2f"/>
<circle cx="935.4" cy="63.6" r="1.0" fill="#c6d8e0"/>
<circle cx="911.2" cy="39.5" r="2.0" fill="#c6d8e0"/>
<circle cx="911.7" cy="74.8" r="2.1" fill="#c6d8e0"/>
<circle cx="911.2" cy="45.1" r="2.0" fill="#6e7a6c"/>
<circle cx="915.7" cy="56.1" r="1.0" fill="#b8ccd6"/>
<circle cx="910.4" cy="53.4" r="2.0" fill="#36423a"/>
<circle cx="917.1" cy="49.9" r="2.1" fill="#5c6a5a"/>
<circle cx="902.7" cy="69.5" r="0.8" fill="#c6d8e0"/>
<circle cx="908.6" cy="75.3" r="0.9" fill="#2a352a"/>
<circle cx="907.2" cy="59.3" r="1.0" fill="#2a352a"/>
<circle cx="905.7" cy="69.4" r="1.5" fill="#b8ccd6"/>
<circle cx="905.7" cy="85.1" r="2.2" fill="#2a352a"/>
<circle cx="904.6" cy="51.9" r="1.4" fill="#2a352a"/>
<circle cx="905.8" cy="68.0" r="1.3" fill="#2f3a2f"/>
<circle cx="935.6" cy="83.8" r="1.5" fill="#36423a"/>
<circle cx="924.0" cy="93.5" r="1.4" fill="#b8ccd6"/>
<circle cx="935.5" cy="93.4" r="1.3" fill="#36423a"/>
<circle cx="901.0" cy="65.3" r="1.3" fill="#6e7a6c"/>
<circle cx="921.3" cy="90.2" r="2.0" fill="#6e7a6c"/>
<circle cx="932.5" cy="58.0" r="1.7" fill="#2a352a"/>
<circle cx="922.8" cy="90.8" r="1.9" fill="#2a352a"/>
<circle cx="904.8" cy="89.6" r="1.4" fill="#b8ccd6"/>
<circle cx="910.0" cy="84.4" r="2.2" fill="#6e7a6c"/>
<circle cx="915.1" cy="81.1" r="0.9" fill="#36423a"/>
<circle cx="903.6" cy="45.4" r="1.0" fill="#6e7a6c"/>
<circle cx="928.5" cy="46.5" r="2.0" fill="#6e7a6c"/>
<circle cx="922.6" cy="58.3" r="1.6" fill="#36423a"/>
<circle cx="897.8" cy="84.4" r="1.8" fill="#2f3a2f"/>
<circle cx="917.5" cy="92.2" r="1.4" fill="#2a352a"/>
<circle cx="904.6" cy="88.7" r="0.8" fill="#36423a"/>
<circle cx="908.4" cy="52.0" r="1.6" fill="#5c6a5a"/>
<circle cx="918.2" cy="86.4" r="0.9" fill="#b8ccd6"/>
<rect x="905" y="95" width="31" height="10.5" fill="#d5d9d5"/>
<path d="M905 97 C912 94 920 96 926 94 C930 96 934 95 936 96 V99 H905 Z" fill="#8a938a" opacity="0.6"/>
<rect x="906.6" y="105.5" width="29.4" height="8.5" fill="#233a22"/>
<path d="M906.6 114 H936" stroke="#4a8f86" stroke-width="1"/>
<!-- left fence -->
<rect x="708" y="100" width="17" height="7.5" fill="#b9bcb6"/>
<!-- garage trees -->
<path d="M731 85 C733 82 738 80 743 81 C748 79 754 81 758 85 Z" fill="#6f726e"/>
<circle cx="737.4" cy="81.3" r="1.0" fill="#8e918c"/>
<circle cx="747.9" cy="78.0" r="0.7" fill="#8e918c"/>
<circle cx="738.0" cy="79.1" r="1.5" fill="#8e918c"/>
<circle cx="745.6" cy="81.3" r="1.0" fill="#7d807b"/>
<circle cx="737.3" cy="78.6" r="1.4" fill="#8e918c"/>
<circle cx="751.0" cy="82.2" r="0.8" fill="#5a5e58"/>
<circle cx="739.1" cy="77.7" r="1.4" fill="#8e918c"/>
<circle cx="747.1" cy="83.9" r="1.0" fill="#8e918c"/>
<circle cx="741.7" cy="83.1" r="1.1" fill="#7d807b"/>
<circle cx="754.7" cy="78.2" r="0.8" fill="#7d807b"/>
<circle cx="738.0" cy="82.2" r="1.3" fill="#4e524c"/>
<circle cx="742.4" cy="83.3" r="1.2" fill="#8e918c"/>
<circle cx="746.8" cy="83.8" r="1.2" fill="#5a5e58"/>
<circle cx="754.1" cy="84.4" r="1.2" fill="#7d807b"/>
<circle cx="749.9" cy="79.8" r="1.1" fill="#5a5e58"/>
<circle cx="750.3" cy="79.0" r="1.4" fill="#4e524c"/>
<circle cx="738.7" cy="77.9" r="1.4" fill="#8e918c"/>
<circle cx="733.4" cy="83.1" r="1.0" fill="#7d807b"/>
<!-- garage -->
<rect x="724.7" y="84.5" width="37.5" height="40" fill="#5f5f60"/>
<rect x="734" y="99" width="26.4" height="22" fill="#434956"/>
<!-- driveway -->
<path d="M708 127 L725 126 L725 123 L762 121 L762 131 L749 132 L708 153 Z" fill="#5b5b5b"/>
<path d="M708 127.5 L725 125" stroke="#b5b5b5" stroke-width="0.8"/>
<path d="M708 153 L749 132" stroke="#c4c4c4" stroke-width="1.1"/>
<!-- terrace -->
<path d="M752 125 L925 124.5 L925 131 L748 133.5 Z" fill="#9d9d9d"/>
<path d="M748 133 L925 131" stroke="#dcdcdc" stroke-width="1.6"/>
<!-- roof -->
<path d="M761 46.3 L812 43 L897.5 52.3 L896.6 55 L762.5 48.5 Z" fill="#353535"/>
<!-- upper facade -->
<path d="M762.9 48 L893.7 54 L893.7 87 L762.9 87 Z" fill="#efefef"/>
<rect x="853" y="71" width="54" height="16" fill="#e9e9e9"/>
<rect x="776" y="61" width="28.8" height="11" fill="#575757"/>
<rect x="856.9" y="63.4" width="25.5" height="9.6" fill="#474b4e"/>
<rect x="820.4" y="62.5" width="8.6" height="22.5" fill="#474747"/>
<rect x="822.5" y="65" width="4" height="8" fill="#465a8a"/>
<rect x="822.5" y="73" width="4" height="12" fill="#8a8a7a"/>
<!-- balconies -->
<rect x="765" y="72" width="43.6" height="13.5" fill="#c3d1c0"/>
<rect x="812.4" y="72" width="37.6" height="13.5" fill="#c6d3c2"/>
<rect x="853" y="72.5" width="41.7" height="13" fill="#c3d1c0"/>
<path d="M765 71.5 H808.6 M812.4 71.5 H850 M853 72 H894.7" stroke="#3a3a3a" stroke-width="1"/>
<path d="M765.5 72 V85.5 M776.5 72 V85.5 M790.5 72 V85.5 M808 72 V85.5 M812.8 72 V85.5 M849.5 72 V85.5 M853.5 72 V85.5 M894.5 72 V85.5" stroke="#555" stroke-width="0.7"/>
<rect x="838" y="77" width="10" height="8" fill="#5a6a55"/>
<!-- slab -->
<rect x="761.7" y="85.5" width="145.3" height="4.5" fill="#f2f2f2"/>
<!-- lower -->
<rect x="761.7" y="87" width="145.3" height="38" fill="#f0f0f0"/>
<rect x="765" y="90" width="43.6" height="34" fill="#515151"/>
<rect x="812.8" y="90" width="31.8" height="33" fill="#4b4b4b"/>
<rect x="844.6" y="90" width="3" height="34" fill="#d0d0d0"/>
<rect x="775.5" y="94.6" width="29.3" height="26.4" fill="#3a3a3a"/>
<rect x="776.5" y="102.5" width="13" height="17.5" fill="#c7d3c3"/>
<rect x="790.5" y="102.5" width="13" height="17.5" fill="#c7d3c3"/>
<rect x="819.6" y="95.6" width="5" height="26.4" fill="#9a9a90"/>
<rect x="836" y="96" width="6.7" height="9" fill="#c5c5c5"/>
<rect x="864.4" y="94.6" width="27.4" height="27.4" fill="#3b3f42"/>
<rect x="865.5" y="103" width="12" height="18" fill="#bfcbbb"/>
<rect x="878.5" y="103" width="12.3" height="18" fill="#bfcbbb"/>
<rect x="830" y="114" width="4" height="9" fill="#2e2e2e"/>
<rect x="806" y="113" width="3" height="11" fill="#2e2e2e"/>
<!-- teal line on lawn -->
<path d="M849 160 L936 139.5" stroke="#5f9f80" stroke-width="1.8"/>
<!-- toolbar -->
<g fill="#5c5c5c" fill-opacity="0.92">
<path d="M713 163 V152 Q713 149 716 149 H770.5 Q773.5 149 773.5 152 V163 Z"/>
<path d="M781.5 163 V152 Q781.5 149 784.5 149 H798.3 Q801.3 149 801.3 152 V163 Z"/>
<path d="M809.3 163 V152 Q809.3 149 812.3 149 H846.5 Q849.5 149 849.5 152 V163 Z"/>
<path d="M857.4 163 V152 Q857.4 149 860.4 149 H873.7 Q876.7 149 876.7 152 V163 Z"/>
</g>
<g fill="none" stroke="#dedede" stroke-width="0.9" stroke-linejoin="round">
<circle cx="723.6" cy="154" r="2.4" stroke="#1fa5a2"/><path d="M719.5 160.5 Q719.5 157.3 723.6 157.3 Q727.7 157.3 727.7 160.5 Z" stroke="#1fa5a2"/>
<path d="M733.2 151.5 V161 M753.6 151.5 V161" stroke="#9a9a9a"/>
<path d="M739.5 157 Q739.5 154 742.5 154 Q744 152 746.5 153 Q748.5 154 748.3 156.5 V158.5 Q748 159.8 746 159.8 H742 Q739.5 159.8 739.5 157 Z M741.5 156.5 H746.5"/>
<path d="M760.8 152 H768.3 V160.5 H760.8 Z M763.5 152 V160.5 M765 153.5 H767 V156 H765 Z"/>
<path d="M787.5 154.5 Q787.5 151.5 790 151.5 Q792.5 151.5 792.5 154.5 V158 Q792.5 160.8 790 160.8 Q787.5 160.8 787.5 158 Z M790 151.5 V154.5 M795 151.5 V160.8 M793.8 152.8 L795 151.5 L796.2 152.8 M793.8 159.5 L795 160.8 L796.2 159.5"/>
<circle cx="818" cy="155.3" r="3.3"/><path d="M820.4 157.7 L823 160.3 M816.4 155.3 H819.6 M818 153.7 V156.9"/>
<path d="M829.3 151.5 V161" stroke="#9a9a9a"/>
<circle cx="838.3" cy="155.3" r="3.3"/><path d="M840.7 157.7 L843.3 160.3 M836.7 155.3 H839.9"/>
<path d="M863.5 155 Q863.5 152 867 152 Q870.5 152 870.5 155 V158.5 Q870.5 161.5 867 161.5 Q863.5 161.5 863.5 158.5 Z M867 152 V155.5 M863.5 155.5 H870.5"/>
</g>
</svg>
<rect x="708" y="163" width="228" height="366" fill="#333333" />
<rect x="715" y="170" width="107" height="23" fill="#484848" />
<rect x="715" y="170" width="107" height="2.5" fill="#16a8a2" />
<rect x="822" y="170" width="107" height="23" fill="#3b3b3b" />
<rect x="715" y="193" width="214" height="329" fill="#484848" />
<text x="742.6" y="184.8" font-size="9.6" fill="#f0f0f0" font-weight="normal" text-anchor="start" stroke="#f0f0f0" stroke-width="0.28" class="tx">Niveau</text>
<text x="723.4" y="213.2" font-size="12" fill="#f5f5f5" font-weight="normal" text-anchor="start" stroke="#f5f5f5" stroke-width="0.28" class="tx">Editer RDC</text>
<rect x="852.5" y="201.5" width="68" height="68" fill="#555555" stroke="#e8e8e8" stroke-width="1"/>
<rect x="723" y="253" width="41" height="23" fill="#585858" />
<rect x="723" y="253" width="41" height="2" fill="#16a8a2" />
<rect x="764" y="256" width="41" height="20" fill="#4d4d4d" />
<rect x="723" y="277" width="198" height="238" fill="#3c3c3c" />
<rect x="723" y="276" width="198" height="238" fill="#585858" />
<rect x="746" y="289.3" width="152" height="1.6" fill="#a0a0a0" />
<text x="746.4" y="313" font-size="11.8" fill="#f5f5f5" font-weight="normal" text-anchor="start" stroke="#f5f5f5" stroke-width="0.28" class="tx">Dimensions</text>
<circle cx="738.4" cy="332.3" r="3.6" fill="#f28a2a"/>
<text x="746" y="335.3" font-size="8.3" fill="#a8a8a8" font-weight="normal" text-anchor="start" >Hauteur du niv...</text>
<text x="746" y="347.3" font-size="8.6" fill="#9a9a9a" font-weight="normal" text-anchor="start" stroke="#9a9a9a" stroke-width="0.28" class="tx">290</text>
<rect x="746" y="351.5" width="76" height="0.8" fill="#8c8c8c" />
<circle cx="738.4" cy="369.67" r="3.6" fill="#4a9be0"/>
<text x="746" y="372.67" font-size="8.3" fill="#a8a8a8" font-weight="normal" text-anchor="start" >Epaisseur du pl...</text>
<text x="746" y="384.67" font-size="8.6" fill="#f2f2f2" font-weight="normal" text-anchor="start" stroke="#f2f2f2" stroke-width="0.28" class="tx">5</text>
<rect x="746" y="388.87" width="76" height="0.8" fill="#8c8c8c" />
<path d="M815 378.67 L818 375.17 L821 378.67 Z M815 380.67 L818 384.17 L821 380.67 Z" fill="#f0f0f0"/>
<circle cx="738.4" cy="407.04" r="3.6" fill="#5dd35d"/>
<text x="746" y="410.04" font-size="8.3" fill="#a8a8a8" font-weight="normal" text-anchor="start" >Hauteur sous pl...</text>
<text x="746" y="422.04" font-size="8.6" fill="#f2f2f2" font-weight="normal" text-anchor="start" stroke="#f2f2f2" stroke-width="0.28" class="tx">250</text>
<rect x="746" y="426.24" width="76" height="0.8" fill="#8c8c8c" />
<path d="M815 416.04 L818 412.54 L821 416.04 Z M815 418.04 L818 421.54 L821 418.04 Z" fill="#f0f0f0"/>
<circle cx="738.4" cy="444.41" r="3.6" fill="#eeea2a"/>
<text x="746" y="447.41" font-size="8.3" fill="#a8a8a8" font-weight="normal" text-anchor="start" >Epaisseur du sol...</text>
<text x="746" y="459.41" font-size="8.6" fill="#f2f2f2" font-weight="normal" text-anchor="start" stroke="#f2f2f2" stroke-width="0.28" class="tx">15</text>
<rect x="746" y="463.61" width="76" height="0.8" fill="#8c8c8c" />
<path d="M815 453.41 L818 449.91 L821 453.41 Z M815 455.41 L818 458.91 L821 455.41 Z" fill="#f0f0f0"/>
<circle cx="738.4" cy="481.78" r="3.6" fill="#e05a5a"/>
<text x="746" y="484.78" font-size="8.3" fill="#a8a8a8" font-weight="normal" text-anchor="start" >Epaisseur de la ...</text>
<text x="746" y="496.78" font-size="8.6" fill="#f2f2f2" font-weight="normal" text-anchor="start" stroke="#f2f2f2" stroke-width="0.28" class="tx">20</text>
<rect x="746" y="500.97999999999996" width="76" height="0.8" fill="#8c8c8c" />
<path d="M815 490.78 L818 487.28 L821 490.78 Z M815 492.78 L818 496.28 L821 492.78 Z" fill="#f0f0f0"/>
<path d="M842.9 386.4 V439.3 M841.2 386.4 H844.6 M841.2 439.3 H844.6" stroke="#f08a20" stroke-width="1"/>
<rect x="848.2" y="386.4" width="6.4" height="52.9" fill="#e8e8e8"/>
<path d="M848.2 392 L854.6 386.4 M848.2 398 L854.6 392.4 M848.2 404 L854.6 398.4 M848.2 410 L854.6 404.4 M848.2 416 L854.6 410.4 M848.2 422 L854.6 416.4 M848.2 428 L854.6 422.4 M848.2 434 L854.6 428.4" stroke="#555" stroke-width="0.7"/>
<rect x="854.6" y="387" width="46.1" height="5.5" fill="#4a9be0"/>
<path d="M859 393.5 V432 M857.5 395.5 L859 393.5 L860.5 395.5 M857.5 430 L859 432 L860.5 430" stroke="#5dd35d" stroke-width="0.9" fill="none"/>
<rect x="865.5" y="398.5" width="16" height="30" fill="none" stroke="#8a8a8a" stroke-width="1.2"/>
<rect x="868" y="401" width="11" height="27.5" fill="none" stroke="#777" stroke-width="0.6"/>
<rect x="854.6" y="429.3" width="46.1" height="4.3" fill="#eeea2a"/>
<rect x="848.2" y="433.6" width="52.5" height="5.7" fill="#e05a5a"/>
<rect x="914" y="344" width="4" height="156" rx="2" fill="#a8a8a8"/>
<g fill="none" stroke="#e6e6e6" stroke-width="1" stroke-linejoin="round">
<path d="M860.6 228.8 L886.5 214.3 L899 222 L891.5 226.8 L913.3 238.8 L895.6 249.3 Z M860.6 228.8 V236 L895.6 255.8 L913.3 245.6 V238.8 M895.6 249.3 V255.8 M899 222 V228.6 L896.3 230"/>
<path d="M723 180.5 L729.5 177 L733 179 L731 180 L735.5 182.5 V186 L729 189.5 L723 186 Z M723 180.5 L729 184 L735.5 180.5 M729 184 V189.5 M723 182.5 L729 186 M723 184.3 L729 187.8" stroke-width="0.9"/>
<circle cx="743.4" cy="265.4" r="5.6" stroke-width="1.1"/><path d="M743.4 264 V268.5" stroke-width="1.4"/>
</g>
<circle cx="743.4" cy="261.8" r="0.8" fill="#eee"/>
<rect x="778" y="261" width="13" height="8.5" fill="none" stroke="#ddd" stroke-width="0.9"/><path d="M779.5 268 L782.5 264 L785 267 L787 265 L789.5 268" stroke="#ddd" stroke-width="0.7" fill="none"/>
<g>
<g fill="none" stroke="#e6e6e6" stroke-width="1" stroke-linejoin="round" stroke-linecap="round">
<!-- Trace pencil -->
<path d="M183 19 L184 15 L194.5 4.5 L197.5 7.5 L187 18 Z M184 15 L187 18 M192.5 6.5 L195.5 9.5"/>
<!-- Ouvrant door -->
<path d="M256.5 18.5 V4.5 H268 V18.5 M254 18.5 H271"/><circle cx="265.5" cy="12" r="0.6" fill="#e6e6e6"/>
<!-- Toit -->
<path d="M327 11.5 L335.5 5 L344 11.5 M329.5 10 V16.5 H341.5 V10 M339 7 V5 H341 V8.5"/>
<!-- Exterieur gazebo -->
<path d="M401.5 10 L408 5 L414.5 10 Z M403 10 V13 M413 10 V13 M400 13 H416 M400 17.5 L403 13 M404.5 17.5 L406 13 M411.5 17.5 L410 13 M416 17.5 L413 13 M406.5 8 H409.5"/>
<!-- Produit -->
<path d="M475 17 V8 Q475 4.5 478.5 4.5 Q482 4.5 482 8 M480.5 8 H483.5 L482 10 Z M473 17.5 H488 V13 H476 M477 13 V11.5 H487 V13"/>
<!-- Revetement roller -->
<path d="M548 4 H559.5 V8.5 H548 Z M559.5 6 H561 V10.5 H553.5 V13 M552 13 H555 V19 H552 Z"/>
<!-- Visuel HD camera -->
<path d="M619.5 8 H623 L624.5 5.5 H630 L631.5 8 H635 V17.5 H619.5 Z"/><circle cx="627.3" cy="12.5" r="3.2"/>
<!-- Indications -->
<path d="M697 4 H707 V14 M697 4 V8 M693 10 L699 7 L704 12 L699 18 L693 15 Z"/><circle cx="697.5" cy="11.5" r="1"/><path d="M700 6.5 H704 M702 8.5 H705"/>
<!-- Dossier folder -->
<path d="M765.5 16 V6 H770 L771.5 7.5 H778 V9.5 M765.5 16 L768.5 9.5 H780.5 L777.5 16 Z"/>
<!-- comment -->
<path d="M845 13 V13 M844.5 13.5"/>
<path d="M845.5 20.5 V21.5 L847.5 20 H857.5 V12.5 H845 V20.5 Z" stroke-width="1.1"/>
<path d="M847.5 15 H855 M847.5 17.5 H855"/>
<!-- save floppy -->
<path d="M873 12.5 H882 L884.5 15 V24 H873 Z M875.5 12.5 V16.5 H881 V12.5 M875.5 24 V19.5 H882 V24" stroke-width="1.1"/>
<!-- fullscreen -->
<path d="M900.5 16 V12.5 H904 M908 12.5 H911.5 V16 M911.5 20 V23.5 H908 M904 23.5 H900.5 V20" stroke-width="1.3"/>
</g>
<circle cx="823.5" cy="18" r="6" fill="#fafafa"/>
<text x="823.5" y="21.8" font-size="9.5" font-weight="bold" fill="#202020" text-anchor="middle" font-family="Liberation Sans">?</text>
<rect x="934.6" y="12" width="1.4" height="12" fill="#9ab4e0"/>

<g fill="none" stroke="#e6e6e6" stroke-width="1" stroke-linejoin="round" stroke-linecap="round">
<!-- Terrain naturel mountains -->
<path d="M13.5 53 L19.5 45 L23 49.5 L25 47 L29 53 Z M19.5 45 L16 53 M21 50 L23 53"/>
<!-- Murs brick -->
<path d="M120.5 45.5 L131.5 41.5 V52.5 L120.5 57 Z M122 45 V56.5" stroke-width="0.8"/>
<path d="M121 48.5 L131.5 44.5 M121 51.5 L131.5 47.5 M121 54.5 L131.5 50.5 M124 45 V56 M127 43.5 V54.5 M130 42.5 V53" stroke-width="0.5" stroke="#cfcfcf"/>
<!-- Types de pieces tag -->
<path d="M189 47 L193.5 42 L204 50.5 L198.5 57 L189 49 Z" stroke-width="1.1"/><circle cx="193" cy="46" r="1.2"/>
<!-- Niveaux stack -->
<path d="M296.5 47 L303 43 L312 48 L305.5 52 Z M296.5 47 V52 L305.5 57 L312 53 V48 M305.5 52 V57 M296.5 49.5 L305.5 54.5 L312 50.5 M308 45 L309.5 43.5 L312 45" stroke-width="0.9"/>
<!-- Transformations -->
<path d="M378 45 H388.5 V55.5 M381.5 41 V52 H392 M381.5 41 L380 42.5 M381.5 41 L383 42.5 M388.5 57.5 L387 56 M388.5 57.5 L390 56"/>
<!-- Implantation -->
<path d="M491.5 49 L498 45 L503 48 V53.5 L496.5 57.5 L491.5 54.5 Z M491.5 49 L496.5 52 V57.5 M496.5 52 L503 48 M494 47.5 L500.5 43.5 L503 45" stroke-width="0.9"/>
<path d="M489 56 L488.5 58 M504.5 56.5 L505 58.5 M498 41 L497 43" stroke-width="0.8"/>

<!-- Mur big brick -->
</g>
<path d="M31.1 79.5 L33.5 81 V97.5 L31.1 96 Z" fill="#d8d8d8"/>
<g transform="matrix(1 -0.5615 0 1 33.5 81)"><rect x="0" y="0" width="18.7" height="16.5" fill="#e2e2e2"/>
<rect x="0.90" y="1.0" width="3.60" height="2.7" rx="0.7" fill="#5d5d5d"/>
<rect x="5.50" y="1.0" width="3.60" height="2.7" rx="0.7" fill="#5d5d5d"/>
<rect x="10.10" y="1.0" width="3.60" height="2.7" rx="0.7" fill="#5d5d5d"/>
<rect x="14.70" y="1.0" width="3.40" height="2.7" rx="0.7" fill="#5d5d5d"/>
<rect x="0.60" y="5.0" width="1.60" height="2.7" rx="0.7" fill="#5d5d5d"/>
<rect x="3.20" y="5.0" width="3.60" height="2.7" rx="0.7" fill="#5d5d5d"/>
<rect x="7.80" y="5.0" width="3.60" height="2.7" rx="0.7" fill="#5d5d5d"/>
<rect x="12.40" y="5.0" width="3.60" height="2.7" rx="0.7" fill="#5d5d5d"/>
<rect x="17.00" y="5.0" width="1.10" height="2.7" rx="0.7" fill="#5d5d5d"/>
<rect x="0.90" y="9.0" width="3.60" height="2.7" rx="0.7" fill="#5d5d5d"/>
<rect x="5.50" y="9.0" width="3.60" height="2.7" rx="0.7" fill="#5d5d5d"/>
<rect x="10.10" y="9.0" width="3.60" height="2.7" rx="0.7" fill="#5d5d5d"/>
<rect x="14.70" y="9.0" width="3.40" height="2.7" rx="0.7" fill="#5d5d5d"/>
<rect x="0.60" y="13.0" width="1.60" height="2.7" rx="0.7" fill="#5d5d5d"/>
<rect x="3.20" y="13.0" width="3.60" height="2.7" rx="0.7" fill="#5d5d5d"/>
<rect x="7.80" y="13.0" width="3.60" height="2.7" rx="0.7" fill="#5d5d5d"/>
<rect x="12.40" y="13.0" width="3.60" height="2.7" rx="0.7" fill="#5d5d5d"/>
<rect x="17.00" y="13.0" width="1.10" height="2.7" rx="0.7" fill="#5d5d5d"/>
</g>
<g fill="none" stroke="#e6e6e6" stroke-width="1" stroke-linejoin="round" stroke-linecap="round">
<!-- Cloison panel -->
<path d="M116.5 80 L135 70 L137 71 V88 L118.5 97 L116.5 96 Z M116.5 80 L118.5 81 L137 71 M118.5 81 V97" stroke-width="1"/>
<!-- Cloison fictive cube -->
<path d="M197.4 78.9 L214.1 69.4 L223.9 74.5 V87.1 L206.6 97 L197.4 91.9 Z M205.9 74.5 V86.8 M214.4 69.6 V92.2 M205.9 74.5 L214.7 79.3 M214.7 82.7 L223.9 87.1 M197.4 91.9 L214.7 82.7 M205.9 86.8 L214.7 92.2" stroke-width="1"/>
<!-- Poteau -->
<path d="M291.5 72 L294.5 69.5 L298 72 V95 L294.5 97.5 L291.5 95 Z M294.5 74 V97.5 M291.5 72 L294.5 74 L298 72" stroke-width="0.9"/>
<!-- Poutre -->
<path d="M365.5 87.5 L392 74.5 L394 76.5 L367.5 90 Z M365.5 87.5 V89.5 L367.5 91.5 L394 78.5 V76.5 M367.5 90 V91.5" stroke-width="0.9"/>
<!-- gear -->
<circle cx="450.5" cy="74" r="3.3" stroke="#9a9a9a" stroke-width="0.9"/><circle cx="450.5" cy="74" r="1.2" stroke="#9a9a9a" stroke-width="0.8"/>
<!-- spinner -->
</g>
<path d="M541 102.8 L544 99.3 L547 102.8 Z M541 105 L544 108.5 L547 105 Z" fill="#eee"/>
</g></svg></body></html>
